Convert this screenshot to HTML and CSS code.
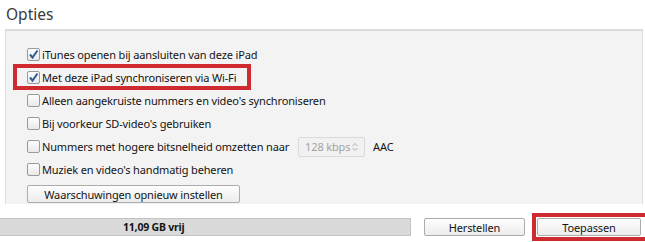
FILE: index.html
```html
<!DOCTYPE html>
<html lang="nl">
<head>
<meta charset="utf-8">
<title>Opties</title>
<link rel="stylesheet" href="styles.css">
</head>
<body>
<div class="title">Opties</div>
<div class="panel">
  <label class="row"><span class="cb checked"><svg viewBox="0 0 13 13" width="13" height="13"><path d="M3 6.5 L5.5 9.5 L10.5 2.5" fill="none" stroke="#2c5b94" stroke-width="2"/></svg></span>iTunes openen bij aansluiten van deze iPad</label>
  <label class="row hl"><span class="cb checked"><svg viewBox="0 0 13 13" width="13" height="13"><path d="M3 6.5 L5.5 9.5 L10.5 2.5" fill="none" stroke="#2c5b94" stroke-width="2"/></svg></span>Met deze iPad synchroniseren via Wi-Fi</label>
  <label class="row"><span class="cb"></span>Alleen aangekruiste nummers en video's synchroniseren</label>
  <label class="row"><span class="cb"></span>Bij voorkeur SD-video's gebruiken</label>
  <label class="row"><span class="cb"></span>Nummers met hogere bitsnelheid omzetten naar<span class="select">128 kbps<svg viewBox="0 0 8 10" width="8" height="10"><path d="M1.5 4 L4 1.5 L6.5 4 M1.5 6 L4 8.5 L6.5 6" fill="none" stroke="#aaa" stroke-width="1"/></svg></span><span class="aac">AAC</span></label>
  <label class="row"><span class="cb"></span>Muziek en video's handmatig beheren</label>
  <button class="btn reset">Waarschuwingen opnieuw instellen</button>
</div>
<div class="footer">
  <div class="capacity">11,09 GB vrij</div>
  <button class="btn herstel">Herstellen</button>
  <button class="btn apply">Toepassen</button>
</div>
</body>
</html>
```
FILE: styles.css
```css
*, *::before, *::after { box-sizing: border-box; }
html, body { margin: 0; padding: 0; background: #fff; }
body {
  width: 645px;
  height: 242px;
  overflow: hidden;
  font-family: "Noto Sans", "Open Sans", sans-serif;
  font-size: 11px;
  letter-spacing: -0.15px;
  color: #141414;
}
.title {
  height: 29px;
  padding: 3px 0 0 6px;
  font-size: 15.5px;
  letter-spacing: 0;
  color: #3a3a3a;
}
.panel {
  margin: 0 2px 0 5px;
  height: 175px;
  background: #f3f3f3;
  border-top: 2px solid #dcdcdc;
  border-left: 1px solid #dcdcdc;
  border-right: 1px solid #dcdcdc;
  padding: 12px 0 0 21px;
  display: flex;
  flex-direction: column;
  align-items: flex-start;
}
.row {
  height: 23px;
  display: flex;
  align-items: center;
  white-space: nowrap;
  position: relative;
}
.row.hl::after {
  content: "";
  position: absolute;
  left: -14px;
  top: -2px;
  width: 238px;
  height: 26px;
  border: 4px solid #cf2a2f;
}
.cb {
  width: 13px;
  height: 13px;
  border: 1px solid #9a9a9a;
  border-radius: 2px;
  background: linear-gradient(#fdfdfd, #e9e9e9);
  margin-right: 2px;
  display: inline-flex;
  flex: none;
}
.cb svg { margin: -1px; }
.select {
  display: inline-flex;
  align-items: center;
  justify-content: space-between;
  width: 67px;
  height: 20px;
  margin-left: 9px;
  padding: 0 5px 0 6px;
  border: 1px solid #dadada;
  border-radius: 2px;
  background: #f1f1f1;
  color: #a3a3a3;
}
.aac { margin-left: 8px; }
.btn {
  font-family: "Noto Sans", "Open Sans", sans-serif;
  font-size: 11px;
  letter-spacing: -0.15px;
  color: #141414;
  height: 18px;
  padding: 0;
  border: 1px solid #acacac;
  border-radius: 2px;
  background: linear-gradient(#fefefe, #ececec);
  display: flex;
  align-items: center;
  justify-content: center;
}
.reset {
  margin-top: 4px;
  width: 213px;
}
.footer {
  display: flex;
  align-items: center;
  padding-top: 14px;
}
.capacity {
  width: 411px;
  height: 18px;
  background: #dadada;
  border: 1px solid #c3c3c3;
  border-left: none;
  font-size: 10.5px;
  font-weight: bold;
  letter-spacing: -0.2px;
  padding-left: 123px;
  display: flex;
  align-items: center;
}
.herstel { width: 101px; margin-left: 13px; }
.apply { width: 104px; margin-left: 12px; position: relative; }
.apply::after {
  content: "";
  position: absolute;
  left: -6px;
  top: -6px;
  width: 120px;
  height: 28px;
  border: 4px solid #cf2a2f;
}
```
